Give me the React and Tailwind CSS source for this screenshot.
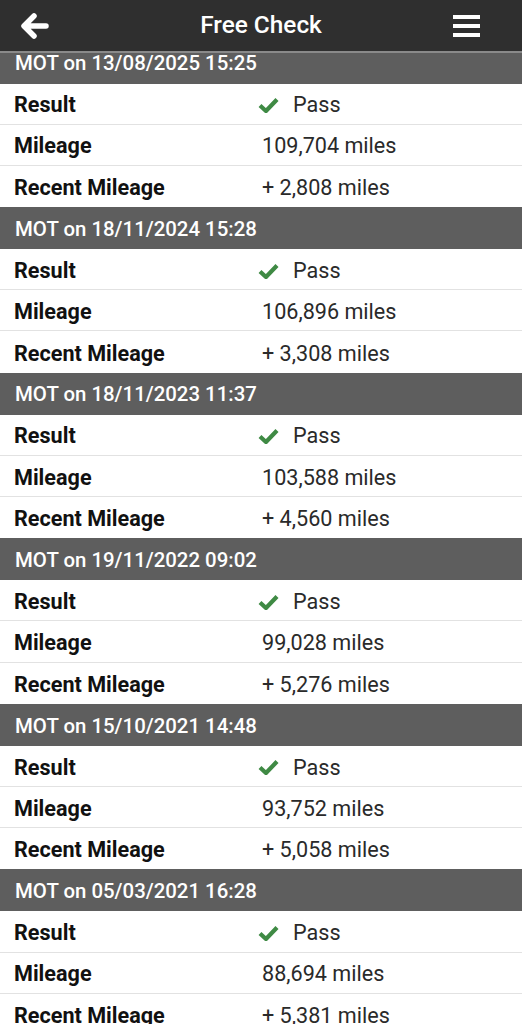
import React from 'react';

const mots = [
    { date: '13/08/2025 15:25', mileage: '109,704', recent: '2,808' },
    { date: '18/11/2024 15:28', mileage: '106,896', recent: '3,308' },
    { date: '18/11/2023 11:37', mileage: '103,588', recent: '4,560' },
    { date: '19/11/2022 09:02', mileage: '99,028', recent: '5,276' },
    { date: '15/10/2021 14:48', mileage: '93,752', recent: '5,058' },
    { date: '05/03/2021 16:28', mileage: '88,694', recent: '5,381' },
];

const BackArrow = () => (
    <svg width="28" height="26" viewBox="0 0 28 26" fill="none">
        <path d="M13 3 L3 13 L13 23 M4 13 H25" stroke="white" strokeWidth="5.5" strokeLinecap="round" strokeLinejoin="round" />
    </svg>
);

const Hamburger = () => (
    <div className="flex flex-col gap-[5px]">
        <div className="w-[27px] h-[4px] bg-white" />
        <div className="w-[27px] h-[4px] bg-white" />
        <div className="w-[27px] h-[4px] bg-white" />
    </div>
);

const Check = () => (
    <svg width="21" height="16" viewBox="0 0 21 16">
        <path d="M2 8.5 L8 14 L19 2.5" stroke="#3f8a44" strokeWidth="4.2" fill="none" strokeLinejoin="miter" />
    </svg>
);

const Row = ({ label, children, last }) => (
    <div className={"flex items-center h-[41.2px] pt-[3px] bg-white " + (last ? "" : "border-b border-[#e2e2e2]")}>
        <div className="w-[262px] pl-[14px] font-bold text-[#111]">{label}</div>
        <div className="flex items-center text-[#2a2a2a]">{children}</div>
    </div>
);

const App = () => {
    return (
        <div className="relative min-h-screen bg-white overflow-hidden" style={{ fontFamily: 'Roboto, "Noto Sans", sans-serif' }}>
            {/* top bar sits over the scrolled list */}
            <div className="fixed top-0 left-0 right-0 z-10 h-[53px] bg-[#2f2f2f] border-b-2 border-[#8a8a8a] grid grid-cols-[1fr_auto_1fr] items-center px-[21px]">
                <div className="flex"><BackArrow /></div>
                <span className="text-white text-[24.4px] font-medium">Free Check</span>
                <div className="flex justify-end pr-[21px]"><Hamburger /></div>
            </div>

            <div className="pt-[41.5px] text-[21.6px] leading-none">
                {mots.map(mot => (
                    <div key={mot.date}>
                        <div className="h-[42px] pt-[2px] bg-[#5e5e5e] flex items-center pl-[15px] text-white font-medium text-[20.4px]">
                            MOT on {mot.date}
                        </div>
                        <Row label="Result">
                            <span className="ml-[-4px] mr-[14px]"><Check /></span>
                            <span>Pass</span>
                        </Row>
                        <Row label="Mileage">{mot.mileage} miles</Row>
                        <Row label="Recent Mileage" last>+ {mot.recent} miles</Row>
                    </div>
                ))}
            </div>
        </div>
    );
};

export default App;
